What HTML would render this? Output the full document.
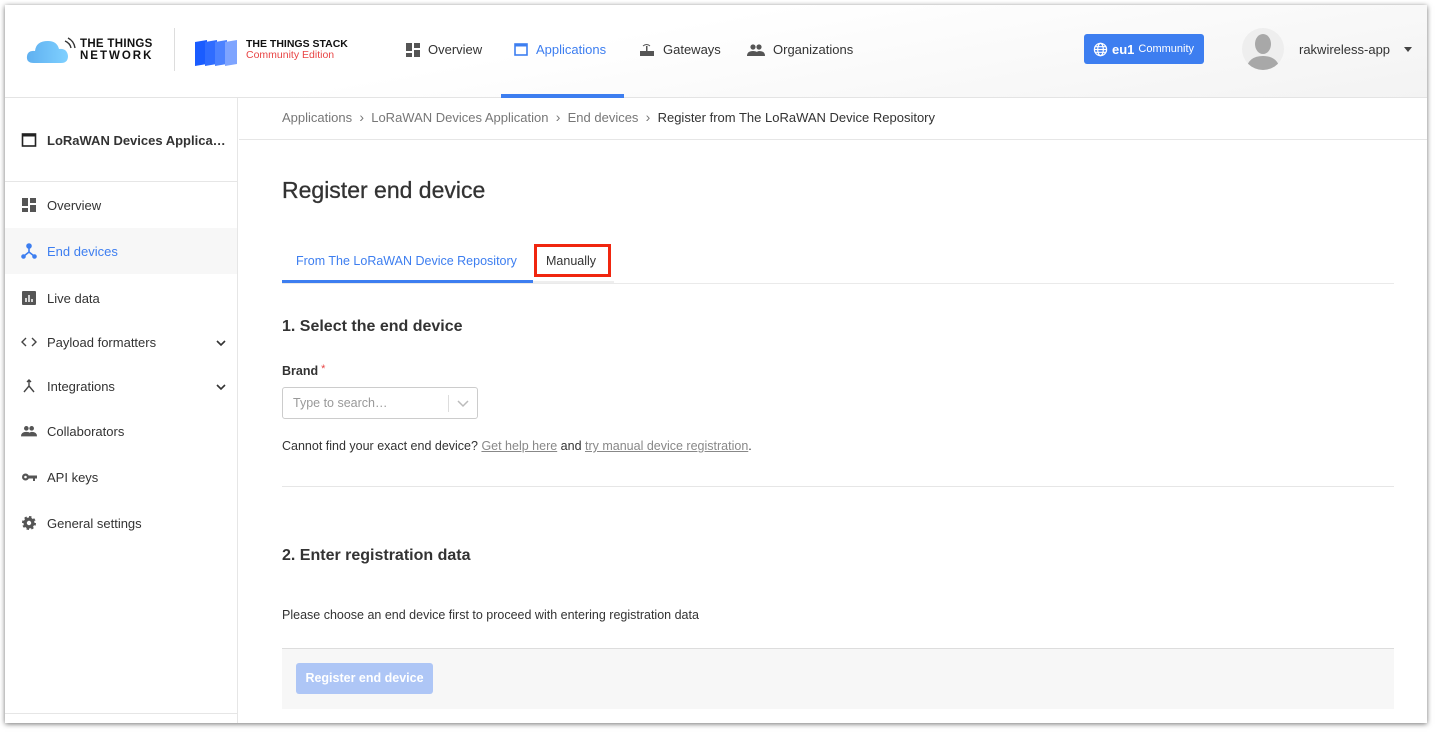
<!DOCTYPE html>
<html><head><meta charset="utf-8"><style>
*{box-sizing:border-box;margin:0;padding:0}
body{width:1436px;height:732px;background:#fff;font-family:"Liberation Sans",sans-serif;color:#333;position:relative;overflow:hidden}
.win{position:absolute;left:5px;top:5px;width:1422px;height:718px;background:#fff;box-shadow:0 1px 5px rgba(0,0,0,.55);overflow:hidden}
.hdr{position:absolute;left:0;top:0;width:1422px;height:93px;background:linear-gradient(170deg,#fff 40%,#f3f3f3);border-bottom:1px solid #e4e4e4}
.abs{position:absolute}
.nav{font-size:13px;color:#333;display:flex;align-items:center;gap:8px}
.side{position:absolute;left:0;top:93px;width:233px;height:625px;border-right:1px solid #e6e6e6}
.si{position:absolute;left:16px;font-size:13px;color:#333;display:flex;align-items:center;gap:10px}
.si svg{width:16px;height:16px}
.chev{position:absolute;left:210px}
a{color:#888;text-decoration:underline}
</style></head><body>
<div class="win">
<div class="hdr">
 <svg class="abs" style="left:21px;top:32px" width="56" height="28" viewBox="0 0 56 28"><defs><linearGradient id="g" x1="0" x2="1"><stop offset="0" stop-color="#5fb0f0"/><stop offset="1" stop-color="#7fd0ff"/></linearGradient></defs><path d="M8 26 Q0 26 1 19 Q2 13 9 14 Q10 4 22 4 Q31 4 33 12 Q41 11 42 19 Q42 26 35 26Z" fill="url(#g)"/><path d="M39 4 Q44 6 45 11 M42 1 Q48 4 49 11" stroke="#333" stroke-width="1.4" fill="none"/></svg>
 <div class="abs" style="left:75px;top:33px;font-weight:bold;font-size:11.5px;line-height:12px;letter-spacing:.3px;color:#111">THE THINGS<br><span style="letter-spacing:2px">NETWORK</span></div>
 <div class="abs" style="left:169px;top:23px;width:1px;height:43px;background:#ddd"></div>
 <svg class="abs" style="left:188px;top:33px" width="44" height="30" viewBox="0 0 44 30"><path d="M2 4 L14 2 L14 26 L2 28Z" fill="#1a5cff"/><path d="M12 4 L24 2 L24 26 L12 28Z" fill="#2f6cff"/><path d="M22 4 L34 2 L34 26 L22 28Z" fill="#4c82ff"/><path d="M32 4 L44 2 L44 26 L32 28Z" fill="#7ea4ff"/></svg>
 <div class="abs" style="left:241px;top:34px;font-weight:bold;font-size:10.5px;line-height:11px;color:#111">THE THINGS STACK<br><span style="color:#e84545;font-weight:normal;font-size:10.5px">Community Edition</span></div>
 <div class="abs nav" style="left:401px;top:37px"><svg width="14" height="14" viewBox="0 0 14 14" fill="#555"><rect x="0" y="0" width="6" height="8"/><rect x="8" y="0" width="6" height="5"/><rect x="0" y="10" width="6" height="4"/><rect x="8" y="7" width="6" height="7"/></svg>Overview</div>
 <div class="abs nav" style="left:509px;top:37px;color:#3d7ef0"><svg width="14" height="13" viewBox="0 0 14 13"><rect x="1" y="1" width="12" height="11" fill="none" stroke="#3d7ef0" stroke-width="1.6"/><rect x="1" y="1" width="12" height="2.5" fill="#3d7ef0"/></svg>Applications</div>
 <div class="abs" style="left:496px;top:89px;width:123px;height:4px;background:#3d7ef0"></div>
 <div class="abs nav" style="left:634px;top:37px"><svg width="16" height="14" viewBox="0 0 16 14" fill="#555"><rect x="1" y="8" width="14" height="5"/><rect x="7" y="3" width="1.5" height="5"/><path d="M4 3 Q7.7 0 11 3" stroke="#555" fill="none"/></svg>Gateways</div>
 <div class="abs nav" style="left:742px;top:37px"><svg width="18" height="12" viewBox="0 0 18 12" fill="#555"><circle cx="6" cy="3" r="2.6"/><circle cx="12" cy="3" r="2.6"/><path d="M0 12 Q0 7 6 7 Q12 7 12 12Z M8 12 Q9 7 12 7 Q18 7 18 12Z"/></svg>Organizations</div>
 <div class="abs" style="left:1079px;top:29px;width:120px;height:30px;background:#3d7ef0;border-radius:3px;color:#fff;font-size:12px;display:flex;align-items:center;padding-left:9px;gap:4px"><svg width="15" height="15" viewBox="0 0 16 16" fill="none" stroke="#fff" stroke-width="1.3"><circle cx="8" cy="8" r="6.5"/><ellipse cx="8" cy="8" rx="3" ry="6.5"/><path d="M1.5 8h13M2.5 5h11M2.5 11h11"/></svg><b style="font-size:13px">eu1</b> <span style="font-size:11px;line-height:13px;padding-top:1px">Community</span></div>
 <div class="abs" style="left:1237px;top:23px;width:42px;height:42px;border-radius:50%;background:#eee;overflow:hidden"><svg width="42" height="42" viewBox="0 0 42 42" fill="#a8a8a8"><ellipse cx="21" cy="16" rx="8" ry="10"/><path d="M4 42 Q6 28 21 28 Q36 28 38 42Z"/></svg></div>
 <div class="abs" style="left:1294px;top:37px;font-size:13px;color:#333">rakwireless-app</div>
 <div class="abs" style="left:1399px;top:42px;width:0;height:0;border-left:4px solid transparent;border-right:4px solid transparent;border-top:5px solid #444"></div>
</div>
<div class="side">
 <div class="si" style="top:34px;font-weight:bold;font-size:13px"><svg viewBox="0 0 16 16"><rect x="1.5" y="2" width="13" height="12" fill="none" stroke="#222" stroke-width="1.6"/><rect x="1.5" y="2" width="13" height="2.5" fill="#222"/></svg>LoRaWAN Devices Applica…</div>
 <div class="abs" style="left:0;top:83px;width:232px;height:1px;background:#e6e6e6"></div>
 <div class="si" style="top:99px"><svg viewBox="0 0 16 16" fill="#555"><rect x="1" y="1" width="6" height="8"/><rect x="9" y="1" width="6" height="5"/><rect x="1" y="11" width="6" height="4"/><rect x="9" y="8" width="6" height="7"/></svg>Overview</div>
 <div class="abs" style="left:0;top:130px;width:232px;height:46px;background:#f7f7f7"></div>
 <div class="si" style="top:145px;color:#3d7ef0"><svg viewBox="0 0 16 16" fill="#3d7ef0" stroke="#3d7ef0" stroke-width="1.6"><circle cx="8" cy="3" r="2"/><path d="M8 4v5L3 13M8 9l5 4" fill="none"/><circle cx="2.5" cy="13.5" r="1.5"/><circle cx="13.5" cy="13.5" r="1.5"/></svg>End devices</div>
 <div class="si" style="top:192px"><svg viewBox="0 0 16 16"><rect x="1" y="1" width="14" height="14" rx="1" fill="#555"/><path d="M5 12V8M8 12V5M11 12V9" stroke="#fff" stroke-width="1.5"/></svg>Live data</div>
 <div class="si" style="top:236px"><svg viewBox="0 0 16 16" fill="none" stroke="#444" stroke-width="1.4"><path d="M5 4L1 8l4 4M11 4l4 4-4 4"/></svg>Payload formatters</div>
 <svg class="chev" style="top:240px" width="12" height="10" viewBox="0 0 12 10"><path d="M2 3l4 4 4-4" fill="none" stroke="#333" stroke-width="1.6"/></svg>
 <div class="si" style="top:280px"><svg viewBox="0 0 16 16" fill="none" stroke="#444" stroke-width="1.4"><path d="M8 2v6L3 14M8 8l5 6M6 4l2-2 2 2"/></svg>Integrations</div>
 <svg class="chev" style="top:284px" width="12" height="10" viewBox="0 0 12 10"><path d="M2 3l4 4 4-4" fill="none" stroke="#333" stroke-width="1.6"/></svg>
 <div class="si" style="top:325px"><svg viewBox="0 0 18 12" fill="#555"><circle cx="6" cy="3" r="2.6"/><circle cx="12" cy="3" r="2.6"/><path d="M0 12Q0 7 6 7Q12 7 12 12ZM8 12Q9 7 12 7Q18 7 18 12Z"/></svg>Collaborators</div>
 <div class="si" style="top:371px"><svg viewBox="0 0 16 16" fill="#555"><circle cx="4.5" cy="8" r="3.5"/><circle cx="4.5" cy="8" r="1.3" fill="#fff"/><rect x="7" y="6.5" width="9" height="3"/><rect x="12" y="8" width="2" height="4"/></svg>API keys</div>
 <div class="si" style="top:417px"><svg viewBox="0 0 16 16"><circle cx="8" cy="8" r="5.5" fill="#555" stroke="#555" stroke-width="3" stroke-dasharray="2.2 2.1"/><circle cx="8" cy="8" r="2.2" fill="#fff"/></svg>General settings</div>
 <div class="abs" style="left:0;top:615px;width:232px;height:1px;background:#e6e6e6"></div>
</div>
<div class="abs" style="left:234px;top:93px;width:1188px;height:42px;border-bottom:1px solid #e6e6e6;font-size:13px;color:#777;padding:11px 0 0 43px">Applications &nbsp;<span style="font-size:14px">›</span>&nbsp; LoRaWAN Devices Application &nbsp;<span style="font-size:14px">›</span>&nbsp; End devices &nbsp;<span style="font-size:14px">›</span>&nbsp; <span style="color:#333">Register from The LoRaWAN Device Repository</span></div>
<div class="abs" style="left:277px;top:172px;font-size:23px;color:#333;-webkit-text-stroke:.3px #333">Register end device</div>
<div class="abs" style="left:291px;top:249px;font-size:12.5px;color:#3d7ef0">From The LoRaWAN Device Repository</div>
<div class="abs" style="left:277px;top:275px;width:251px;height:3px;background:#3d7ef0"></div>
<div class="abs" style="left:528px;top:276px;width:81px;height:2px;background:#eee"></div>
<div class="abs" style="left:277px;top:278px;width:1112px;height:1px;background:#eaeaea"></div>
<div class="abs" style="left:529px;top:239px;width:77px;height:33px;border:3px solid #f0260f"></div>
<div class="abs" style="left:541px;top:249px;font-size:12.5px;color:#333">Manually</div>
<div class="abs" style="left:277px;top:313px;font-size:16px;font-weight:bold;color:#333">1. Select the end device</div>
<div class="abs" style="left:277px;top:358px;font-size:12.5px;font-weight:bold;color:#333">Brand<span style="color:#e84545;font-weight:normal;vertical-align:3px;font-size:11px"> *</span></div>
<div class="abs" style="left:277px;top:382px;width:196px;height:32px;border:1px solid #ccc;border-radius:3px"><span class="abs" style="left:10px;top:8px;font-size:12.5px;color:#999">Type to search…</span><span class="abs" style="left:165px;top:7px;width:1px;height:17px;background:#ddd"></span><svg class="abs" style="left:174px;top:10px" width="12" height="10" viewBox="0 0 12 10"><path d="M1 3l5 5 5-5" fill="none" stroke="#bbb" stroke-width="1.5"/></svg></div>
<div class="abs" style="left:277px;top:434px;font-size:12.5px;color:#333">Cannot find your exact end device? <a>Get help here</a> and <a>try manual device registration</a>.</div>
<div class="abs" style="left:277px;top:481px;width:1112px;height:1px;background:#e6e6e6"></div>
<div class="abs" style="left:277px;top:542px;font-size:16px;font-weight:bold;color:#333">2. Enter registration data</div>
<div class="abs" style="left:277px;top:603px;font-size:12.5px;color:#333">Please choose an end device first to proceed with entering registration data</div>
<div class="abs" style="left:277px;top:643px;width:1112px;height:61px;background:#f7f7f7;border-top:1px solid #ddd"></div>
<div class="abs" style="left:291px;top:658px;width:137px;height:31px;background:#aec6f6;border-radius:3px;color:#fff;font-size:12.5px;font-weight:bold;text-align:center;line-height:31px">Register end device</div>
</div>
</body></html>
